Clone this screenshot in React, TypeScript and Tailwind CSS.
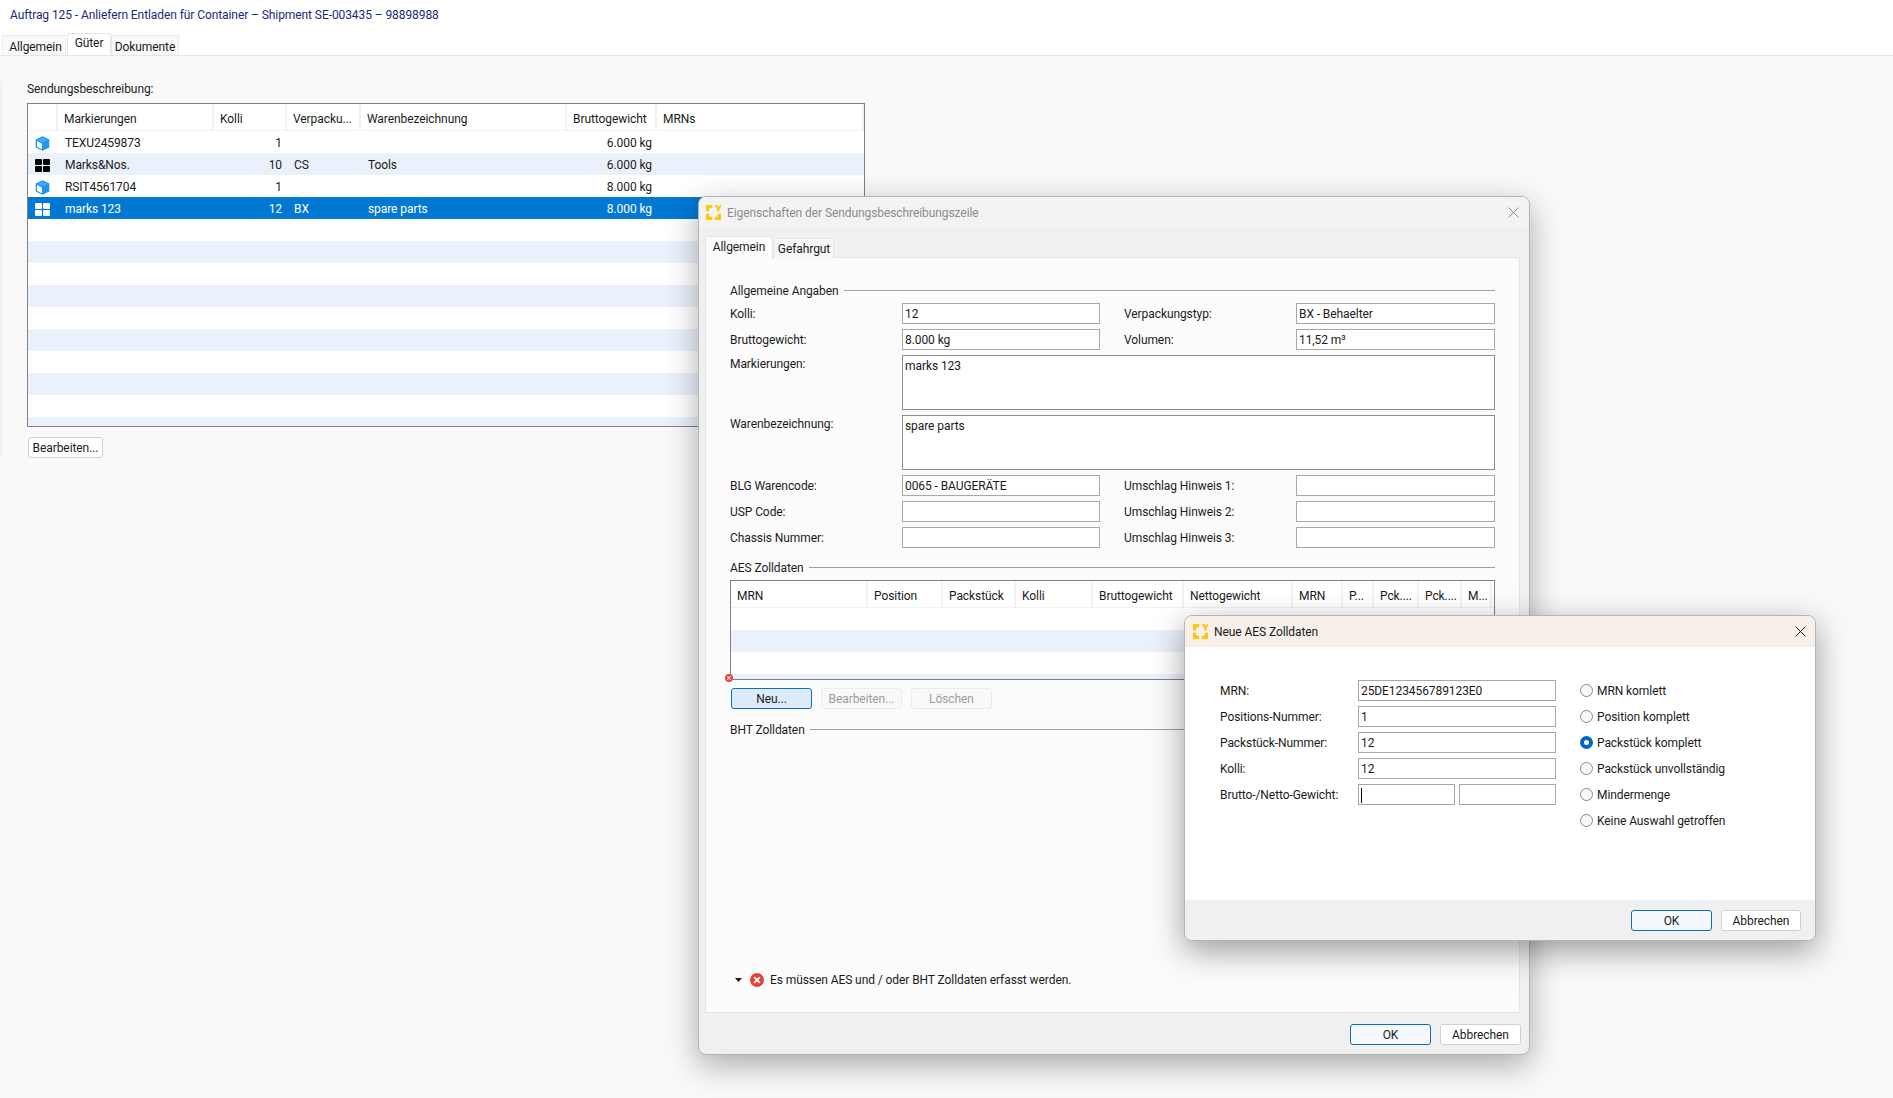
import React from "react";

function Logo() {
  return (
    <svg width="15" height="15" viewBox="0 0 15 15" className="shrink-0" fill="#fdc70c">
      <path d="M0 0h6.2v3.2H3.2V6.2H0z" />
      <path d="M0 8.8h3.2v3H6.2V15H0z" />
      <path d="M8.8 11.8h3V8.8H15V15H8.8z" />
      <path d="M8.8 0h2.8l1.2 2 1.2-2H15v1.4L13.4 4.6v1.6h-2.2V4.6z" />
    </svg>
  );
}

function Cube() {
  return (
    <svg width="15" height="15" viewBox="0 0 15 15" className="shrink-0">
      <path d="M7.5 0.2 14.3 3.5v8L7.5 14.8 0.7 11.5v-8z" fill="#1e96ec" />
      <path d="M7.5 1.6 12.4 4 7.5 6.4 2.6 4z" fill="#45abf3" />
      <path d="M2 5.1 6.9 7.5v5.7L2 10.8z" fill="#ffffff" />
    </svg>
  );
}

function Grid4({ color }: { color: string }) {
  return (
    <svg width="15" height="13" viewBox="0 0 15 13" className="shrink-0" fill={color}>
      <rect x="0" y="0" width="7" height="6" rx="1" />
      <rect x="8" y="0" width="7" height="6" rx="1" />
      <rect x="0" y="7" width="7" height="6" rx="1" />
      <rect x="8" y="7" width="7" height="6" rx="1" />
    </svg>
  );
}

function CloseX({ color, size }: { color: string; size: number }) {
  return (
    <svg width={size} height={size} viewBox="0 0 10 10" stroke={color} strokeWidth="0.9" fill="none">
      <path d="M0.5 0.5 9.5 9.5M9.5 0.5 0.5 9.5" />
    </svg>
  );
}

function ErrorIcon({ size }: { size: number }) {
  return (
    <svg width={size} height={size} viewBox="0 0 14 14" className="shrink-0">
      <circle cx="7" cy="7" r="7" fill="#e8413a" />
      <path d="M4.6 4.6 9.4 9.4M9.4 4.6 4.6 9.4" stroke="#ffffff" strokeWidth="1.8" strokeLinecap="round" />
    </svg>
  );
}

function Field({ value, className = "", children }: { value?: string; className?: string; children?: React.ReactNode }) {
  return (
    <div className={`h-[21px] bg-white border border-[#a8a8ac] pl-[2px] leading-[21px] text-[#1b1b1b] whitespace-nowrap overflow-hidden ${className}`}>
      {value}
      {children}
    </div>
  );
}

function Area({ value }: { value: string }) {
  return (
    <div className="col-span-4 h-[55px] bg-white border border-[#8c8c94] pl-[2px] pt-[2px] leading-[17px] text-[#1b1b1b]">{value}</div>
  );
}

function Label({ text }: { text: string }) {
  return <div className="h-[21px] leading-[23px] text-[#1b1b1b] whitespace-nowrap">{text}</div>;
}

function TopLabel({ text }: { text: string }) {
  return <div className="leading-[19px] text-[#1b1b1b] whitespace-nowrap">{text}</div>;
}

function SectionHead({ text, className = "" }: { text: string; className?: string }) {
  return (
    <div className={`flex items-center h-[17px] gap-[5px] text-[#1b1b1b] ${className}`}>
      <span className="whitespace-nowrap leading-[17px] pt-[2px]">{text}</span>
      <div className="flex-1 h-px bg-[#a0a0a0]" />
    </div>
  );
}

function Btn({ text, variant = "normal", className = "" }: { text: string; variant?: "normal" | "primary" | "focus" | "disabled"; className?: string }) {
  const styles = {
    normal: "bg-white border-[#d0d0d0] text-[#1b1b1b]",
    primary: "bg-[#f5f9fd] border-[#0f6cbd] text-[#1b1b1b]",
    focus: "bg-[#dcebf9] border-[#0f6cbd] text-[#1b1b1b]",
    disabled: "bg-[#f9f9f9] border-[#ebebeb] text-[#9c9c9c]",
  }[variant];
  return (
    <div className={`h-[21px] flex items-center justify-center border rounded-[3px] leading-none whitespace-nowrap ${styles} ${className}`}>{text}</div>
  );
}

const mainCols = "grid grid-cols-[30px_156px_73px_74px_206px_90px_1fr]";

function HeadCell({ text, className = "" }: { text?: string; className?: string }) {
  return (
    <div className={`h-full pl-[6px] border-r-2 border-[#f1f1f1] whitespace-nowrap overflow-hidden text-[#1b1b1b] ${className}`}>{text}</div>
  );
}

type Row = { icon?: "cube" | "grid"; mark?: string; kolli?: string; pack?: string; ware?: string; gew?: string; selected?: boolean };

const rows: Row[] = [
  { icon: "cube", mark: "TEXU2459873", kolli: "1", gew: "6.000 kg" },
  { icon: "grid", mark: "Marks&Nos.", kolli: "10", pack: "CS", ware: "Tools", gew: "6.000 kg" },
  { icon: "cube", mark: "RSIT4561704", kolli: "1", gew: "8.000 kg" },
  { icon: "grid", mark: "marks 123", kolli: "12", pack: "BX", ware: "spare parts", gew: "8.000 kg", selected: true },
  ...Array.from({ length: 10 }, () => ({})),
];

function MainTable() {
  return (
    <div className="w-[838px] h-[324px] border border-[#7f7f88] bg-white overflow-hidden">
      <div className={`${mainCols} h-[27px] border-b border-[#f1f1f1]`}>
        <HeadCell className="leading-[31px]" />
        <HeadCell text="Markierungen" className="leading-[31px]" />
        <HeadCell text="Kolli" className="leading-[31px]" />
        <HeadCell text="Verpacku..." className="leading-[31px]" />
        <HeadCell text="Warenbezeichnung" className="leading-[31px]" />
        <HeadCell text="Bruttogewicht" className="leading-[31px]" />
        <HeadCell text="MRNs" className="border-r-0 leading-[31px]" />
      </div>
      {rows.map((r, i) => (
        <div
          key={i}
          className={`${mainCols} h-[22px] leading-[24px] ${r.selected ? "bg-[#0078d4] text-white" : i % 2 === 1 ? "bg-[#ebf1fb] text-[#1b1b1b]" : "bg-white text-[#1b1b1b]"}`}
        >
          <div className="flex items-center pl-[7px]">
            {r.icon === "cube" && <Cube />}
            {r.icon === "grid" && <Grid4 color={r.selected ? "#ffffff" : "#000000"} />}
          </div>
          <div className="pl-[7px]">{r.mark}</div>
          <div className="text-right pr-[5px]">{r.kolli}</div>
          <div className="pl-[7px]">{r.pack}</div>
          <div className="pl-[7px]">{r.ware}</div>
          <div className="text-right pr-[5px]">{r.gew}</div>
          <div />
        </div>
      ))}
    </div>
  );
}

const aesCols = "grid grid-cols-[137px_75px_73px_77px_91px_109px_50px_31px_45px_43px_30px_1fr]";

function AesTable() {
  const heads = ["MRN", "Position", "Packstück", "Kolli", "Bruttogewicht", "Nettogewicht", "MRN", "P...", "Pck....", "Pck....", "M..."];
  return (
    <div className="h-[100px] border border-[#7f7f88] bg-white overflow-hidden">
      <div className={`${aesCols} h-[27px] border-b border-[#f1f1f1]`}>
        {heads.map((h, i) => (
          <HeadCell key={i} text={h} className="leading-[30px]" />
        ))}
      </div>
      <div className="h-[22px]" />
      <div className="h-[22px] bg-[#ebf1fb]" />
      <div className="h-[22px]" />
      <div className="h-[22px] bg-[#ebf1fb]" />
    </div>
  );
}

function TabPill({ text, active, className = "" }: { text: string; active?: boolean; className?: string }) {
  return (
    <div
      className={
        active
          ? `h-[22px] flex items-start justify-center pt-[2px] bg-[#fbfbfb] border border-b-0 border-[#e4e4e4] rounded-t-[3px] text-[#1b1b1b] leading-[17px] ${className}`
          : `h-[20px] flex items-center justify-center pt-[2px] bg-[#f7f7f7] border border-b-0 border-[#e8e8e8] rounded-t-[2px] text-[#1b1b1b] leading-[17px] ${className}`
      }
    >
      {text}
    </div>
  );
}

function FirstDialog() {
  return (
    <div className="absolute left-[698px] top-[196px] w-[832px] h-[859px] flex flex-col rounded-lg border border-[#b4b4b4] bg-[#f0f0f0] shadow-[0_10px_32px_rgba(0,0,0,0.32)] overflow-hidden">
      <div className="h-[31px] shrink-0 flex items-center pl-[7px] pr-[10px] bg-[#f3f3f3]">
        <Logo />
        <span className="ml-[6px] text-[#8b8b8b] whitespace-nowrap">Eigenschaften der Sendungsbeschreibungszeile</span>
        <div className="ml-auto">
          <CloseX color="#8b8b8b" size={11} />
        </div>
      </div>
      <div className="flex items-end h-[30px] shrink-0 pl-[6px] -mb-px z-10">
        <TabPill text="Allgemein" active className="w-[68px]" />
        <TabPill text="Gefahrgut" className="w-[60px] ml-px" />
      </div>
      <div className="relative ml-[6px] mr-[9px] h-[756px] shrink-0 bg-[#fbfbfb] border border-[#e4e4e4] flex flex-col pl-[24px] pr-[24px] pt-[24px] pb-[24px]">
        <SectionHead text="Allgemeine Angaben" />
        <div className="mt-[4px] grid grid-cols-[172px_198px_24px_172px_199px] gap-y-[5px]">
          <Label text="Kolli:" />
          <Field value="12" />
          <div />
          <Label text="Verpackungstyp:" />
          <Field value="BX - Behaelter" />

          <Label text="Bruttogewicht:" />
          <Field value="8.000 kg" />
          <div />
          <Label text="Volumen:" />
          <Field value="11,52 m³" />

          <TopLabel text="Markierungen:" />
          <Area value="marks 123" />

          <TopLabel text="Warenbezeichnung:" />
          <Area value="spare parts" />

          <Label text="BLG Warencode:" />
          <Field value="0065 - BAUGERÄTE" />
          <div />
          <Label text="Umschlag Hinweis 1:" />
          <Field />

          <Label text="USP Code:" />
          <Field />
          <div />
          <Label text="Umschlag Hinweis 2:" />
          <Field />

          <Label text="Chassis Nummer:" />
          <Field />
          <div />
          <Label text="Umschlag Hinweis 3:" />
          <Field />
        </div>
        <SectionHead text="AES Zolldaten" className="mt-[11px] mb-[4px]" />
        <AesTable />
        <div className="mt-[8px] ml-px flex gap-[9px]">
          <Btn text="Neu..." variant="focus" className="w-[81px]" />
          <Btn text="Bearbeiten..." variant="disabled" className="w-[81px]" />
          <Btn text="Löschen" variant="disabled" className="w-[81px]" />
        </div>
        <SectionHead text="BHT Zolldaten" className="mt-[12px]" />
        <div className="mt-auto flex items-center h-[17px] text-[#1b1b1b]">
          <svg width="7" height="4" viewBox="0 0 7 4" className="ml-[5px] shrink-0" fill="#1b1b1b">
            <path d="M0 0h7L3.5 4z" />
          </svg>
          <div className="ml-[8px]">
            <ErrorIcon size={14} />
          </div>
          <span className="ml-[6px] whitespace-nowrap">Es müssen AES und / oder BHT Zolldaten erfasst werden.</span>
        </div>
        <div className="absolute left-[19px] top-[416px]">
          <ErrorIcon size={8} />
        </div>
      </div>
      <div className="flex-1 flex justify-end items-start gap-[9px] pt-[11px] pr-[8px]">
        <Btn text="OK" variant="primary" className="w-[81px]" />
        <Btn text="Abbrechen" className="w-[81px]" />
      </div>
    </div>
  );
}

function Radio({ text, checked }: { text: string; checked?: boolean }) {
  return (
    <div className="h-[21px] flex items-center text-[#1b1b1b] whitespace-nowrap">
      {checked ? (
        <span className="w-[13px] h-[13px] rounded-full border-[4px] border-[#0067c0] bg-white shrink-0" />
      ) : (
        <span className="w-[13px] h-[13px] rounded-full border border-[#8a8a8a] bg-[#f8f8f8] shrink-0" />
      )}
      <span className="ml-[4px]">{text}</span>
    </div>
  );
}

function SecondDialog() {
  return (
    <div className="absolute left-[1184px] top-[615px] w-[632px] h-[326px] flex flex-col rounded-lg border border-[#b4b4b4] bg-white shadow-[0_10px_32px_rgba(0,0,0,0.38)] overflow-hidden">
      <div className="h-[31px] shrink-0 flex items-center pl-[8px] pr-[9px] bg-[#f7f0ea]">
        <Logo />
        <span className="ml-[6px] text-[#1b1b1b] whitespace-nowrap">Neue AES Zolldaten</span>
        <div className="ml-auto">
          <CloseX color="#1b1b1b" size={11} />
        </div>
      </div>
      <div className="flex-1 flex pt-[33px] pl-[35px]">
        <div className="w-[138px] shrink-0 flex flex-col gap-[5px]">
          <Label text="MRN:" />
          <Label text="Positions-Nummer:" />
          <Label text="Packstück-Nummer:" />
          <Label text="Kolli:" />
          <Label text="Brutto-/Netto-Gewicht:" />
        </div>
        <div className="w-[198px] shrink-0 flex flex-col gap-[5px]">
          <Field value="25DE123456789123E0" />
          <Field value="1" />
          <Field value="12" />
          <Field value="12" />
          <div className="flex justify-between">
            <Field className="w-[97px]">
              <span className="inline-block w-px h-[15px] bg-black align-middle" />
            </Field>
            <Field className="w-[97px]" />
          </div>
        </div>
        <div className="ml-[24px] flex flex-col gap-[5px]">
          <Radio text="MRN komlett" />
          <Radio text="Position komplett" />
          <Radio text="Packstück komplett" checked />
          <Radio text="Packstück unvollständig" />
          <Radio text="Mindermenge" />
          <Radio text="Keine Auswahl getroffen" />
        </div>
      </div>
      <div className="h-[40px] shrink-0 bg-[#f0f0f0] flex justify-end items-start gap-[9px] pt-[10px] pr-[14px]">
        <Btn text="OK" variant="primary" className="w-[81px]" />
        <Btn text="Abbrechen" className="w-[80px]" />
      </div>
    </div>
  );
}

export default function App() {
  return (
    <div className="relative w-[1893px] h-[1098px] overflow-hidden bg-[#f9f9f9] text-[12px] tracking-[-0.08px] font-[Roboto,sans-serif]">
      <div className="h-[56px] bg-white border-b border-[#e6e6e6] flex flex-col">
        <div className="h-[35px] pl-[10px] pt-[6px] leading-[18px] text-[#1a2a7c] whitespace-nowrap">
          Auftrag 125 - Anliefern Entladen für Container – Shipment SE-003435 – 98898988
        </div>
        <div className="flex items-end h-[21px] pl-[2px] text-[#1b1b1b]">
          <div className="w-[64px] h-[20px] pl-[3px] pt-[2px] bg-[#f9f9f9] border border-b-0 border-[#ececec] flex items-center justify-center leading-none">Allgemein</div>
          <div className="w-[44px] h-[22px] -mt-px ml-px bg-white border border-b-0 border-[#e4e4e4] rounded-t-[3px] flex items-start justify-center pt-[1px] leading-[17px]">Güter</div>
          <div className="w-[68px] h-[20px] pt-[2px] bg-[#f9f9f9] border border-b-0 border-[#ececec] flex items-center justify-center leading-none">Dokumente</div>
        </div>
      </div>
      <div className="border-l-[3px] border-[#f3f3f3] pl-[24px]">
        <div className="h-[17px] mt-[25px] mb-[5px] leading-[17px] text-[#1b1b1b]">Sendungsbeschreibung:</div>
        <MainTable />
        <Btn text="Bearbeiten..." className="w-[75px] mt-[10px] ml-px" />
      </div>
      <FirstDialog />
      <SecondDialog />
    </div>
  );
}
